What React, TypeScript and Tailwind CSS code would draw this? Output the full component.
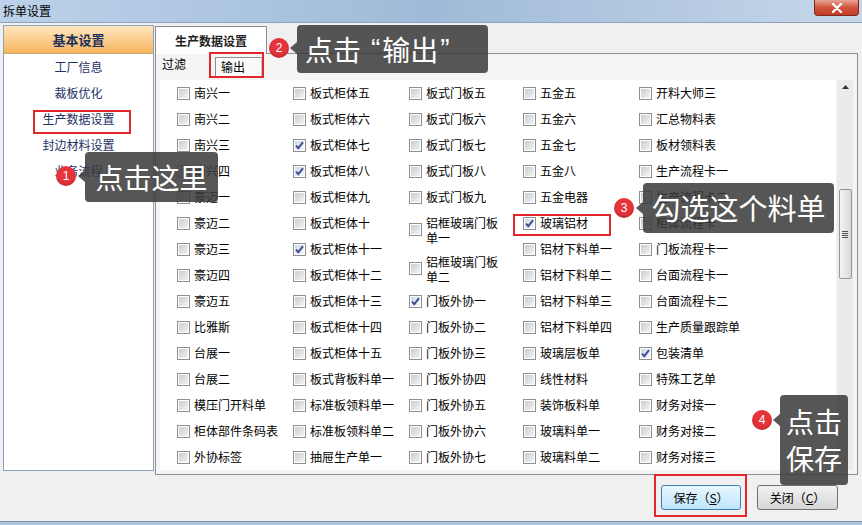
import React from "react";

type Item = { t: React.ReactNode; c?: boolean; tall?: boolean };

const col1: Item[] = [
  { t: "南兴一" }, { t: "南兴二" }, { t: "南兴三" }, { t: "南兴四" }, { t: "豪迈一" },
  { t: "豪迈二" }, { t: "豪迈三" }, { t: "豪迈四" }, { t: "豪迈五" }, { t: "比雅斯" },
  { t: "台展一" }, { t: "台展二" }, { t: "模压门开料单" }, { t: "柜体部件条码表" }, { t: "外协标签" },
];
const col2: Item[] = [
  { t: "板式柜体五" }, { t: "板式柜体六" }, { t: "板式柜体七", c: true }, { t: "板式柜体八", c: true },
  { t: "板式柜体九" }, { t: "板式柜体十" }, { t: "板式柜体十一", c: true }, { t: "板式柜体十二" },
  { t: "板式柜体十三" }, { t: "板式柜体十四" }, { t: "板式柜体十五" }, { t: "板式背板料单一" },
  { t: "标准板领料单一" }, { t: "标准板领料单二" }, { t: "抽屉生产单一" },
];
const col3: Item[] = [
  { t: "板式门板五" }, { t: "板式门板六" }, { t: "板式门板七" }, { t: "板式门板八" }, { t: "板式门板九" },
  { t: <>铝框玻璃门板<br />单一</>, tall: true },
  { t: <>铝框玻璃门板<br />单二</>, tall: true },
  { t: "门板外协一", c: true }, { t: "门板外协二" }, { t: "门板外协三" }, { t: "门板外协四" },
  { t: "门板外协五" }, { t: "门板外协六" }, { t: "门板外协七" },
];
const col4: Item[] = [
  { t: "五金五" }, { t: "五金六" }, { t: "五金七" }, { t: "五金八" }, { t: "五金电器" },
  { t: "玻璃铝材", c: true }, { t: "铝材下料单一" }, { t: "铝材下料单二" }, { t: "铝材下料单三" },
  { t: "铝材下料单四" }, { t: "玻璃层板单" }, { t: "线性材料" }, { t: "装饰板料单" },
  { t: "玻璃料单一" }, { t: "玻璃料单二" },
];
const col5: Item[] = [
  { t: "开料大师三" }, { t: "汇总物料表" }, { t: "板材领料表" }, { t: "生产流程卡一" },
  { t: "生产流程卡二" }, { t: "柜体流程卡" }, { t: "门板流程卡一" }, { t: "台面流程卡一" },
  { t: "台面流程卡二" }, { t: "生产质量跟踪单" }, { t: "包装清单", c: true }, { t: "特殊工艺单" },
  { t: "财务对接一" }, { t: "财务对接二" }, { t: "财务对接三" },
];

const columns: { w: string; items: Item[] }[] = [
  { w: "w-[116px]", items: col1 },
  { w: "w-[116px]", items: col2 },
  { w: "w-[114px]", items: col3 },
  { w: "w-[116px]", items: col4 },
  { w: "w-[116px]", items: col5 },
];

const navItems = ["工厂信息", "裁板优化", "生产数据设置", "封边材料设置", "业务流程"];

function CheckBox({ checked }: { checked?: boolean }) {
  return (
    <span className="flex h-[13px] w-[13px] shrink-0 items-center justify-center border border-[#8e8f8f] bg-white">
      <span
        className={
          checked
            ? "relative h-[9px] w-[9px] bg-gradient-to-br from-[#cfd8ea] to-[#f4f6fb]"
            : "relative h-[9px] w-[9px] bg-gradient-to-br from-[#c9cdd3] to-[#f3f3f3]"
        }
      >
        {checked && (
          <svg className="absolute -left-[1px] -top-[1px]" width="11" height="11" viewBox="0 0 11 11">
            <path d="M2 5.6 L4.3 8.2 L9 2.2" fill="none" stroke="#3f4f88" strokeWidth="1.9" />
          </svg>
        )}
      </span>
    </span>
  );
}

function Badge({ n, x, y }: { n: number; x: number; y: number }) {
  return (
    <div
      className="absolute flex h-[20px] w-[20px] items-center justify-center rounded-full bg-[#e5343a] font-['Liberation_Sans',sans-serif] text-[12px] text-white shadow-[inset_0_-2px_3px_rgba(0,0,0,0.15)]"
      style={{ left: x - 10, top: y - 10 }}
    >
      {n}
    </div>
  );
}

function Callout({ children, className, arrowTop }: { children: React.ReactNode; className: string; arrowTop: number }) {
  return (
    <div className={"absolute flex items-center rounded-[4px] bg-[rgba(58,58,58,0.86)] text-white " + className}>
      <span
        className="absolute -left-[7px] h-0 w-0 border-y-[6px] border-r-[7px] border-y-transparent border-r-[rgba(58,58,58,0.86)]"
        style={{ top: arrowTop - 6 }}
      />
      {children}
    </div>
  );
}

function Button({ label, hot, primary }: { label: string; hot: string; primary?: boolean }) {
  return (
    <button
      className={[
        "flex h-[25px] items-center justify-center rounded-[3px] border bg-gradient-to-b text-[12px] text-black",
        primary
          ? "w-[80px] border-[#3c7fb1] from-[#eaf6fd] to-[#bee6fd]"
          : "w-[81px] border-[#707070] from-[#f2f2f2] to-[#d6d6d6]",
      ].join(" ")}
    >
      {label}（<span className="underline">{hot}</span>）
    </button>
  );
}

export default function App() {
  return (
    <div className="relative flex h-[525px] w-[862px] flex-col overflow-hidden bg-[#f0f0f0] font-['Noto_Sans_CJK_SC','Liberation_Sans',sans-serif] text-black">
      {/* title bar */}
      <div className="relative flex h-[23px] shrink-0 items-center border-b border-[#8ba3c0] bg-gradient-to-r from-[#bcd2ea] via-[#9fbad8] to-[#c6d7e9] pl-[3px] text-[12px]">
        拆单设置
        <div className="absolute right-[3px] top-0 flex h-[16px] w-[45px] items-center justify-center rounded-b-[4px] border border-t-0 border-[#7a2a22] bg-gradient-to-b from-[#e8a493] via-[#d0543c] to-[#c53b22]">
          <svg width="12" height="10" viewBox="0 0 12 10">
            <path d="M2 1 L10 9 M10 1 L2 9" stroke="#fff" strokeWidth="2.4" strokeLinecap="round" />
          </svg>
        </div>
      </div>

      {/* main */}
      <div className="flex h-[448px] shrink-0 gap-[1px] pl-[3px] pr-[4px] pt-[2px]">
        {/* left nav */}
        <div className="flex w-[151px] shrink-0 flex-col border border-[#8da2bf] bg-white">
          <div className="flex h-[28px] items-center justify-center border-b border-[#c7a979] bg-gradient-to-b from-[#fee8c0] to-[#f6b45a] text-[13px] font-bold text-[#1c2f5e]">
            基本设置
          </div>
          {navItems.map((n) => (
            <div key={n} className="flex h-[26px] items-center justify-center text-[12px] text-[#1d3163]">
              {n}
            </div>
          ))}
        </div>

        {/* tab panel */}
        <div className="flex flex-1 flex-col">
          <div className="flex h-[28px] shrink-0 items-end">
            <div className="relative -mb-[1px] flex h-[28px] w-[112px] items-center justify-center border border-b-0 border-[#8c8e94] bg-white text-[12px] font-bold text-[#222]">
              生产数据设置
            </div>
          </div>
          <div className="flex flex-1 flex-col border border-[#8c8e94] bg-[#f4f4f4] px-[4px] pb-[4px]">
            <div className="flex h-[26px] shrink-0 items-end text-[12px]">
              <div className="mb-[7px] ml-[2px] w-[53px]">过滤</div>
              <div className="mb-[2px] flex h-[21px] w-[47px] items-center border border-b-0 border-l-[#8c8e94] border-t-[#8c8e94] border-r-[#c8c8c8] bg-[#fafafa] pb-[2px] pl-[5px]">
                输出
              </div>
            </div>
            <div className="flex flex-1 overflow-hidden bg-white">
              <div className="flex flex-1 pl-[17px]">
                {columns.map((col, i) => (
                  <div key={i} className={"flex shrink-0 flex-col " + col.w}>
                    {col.items.map((it, j) => (
                      <div
                        key={j}
                        className={
                          "flex shrink-0 items-center gap-[4px] text-[12px] " +
                          (it.tall ? "h-[39px] leading-[15px]" : "h-[26px]")
                        }
                      >
                        <CheckBox checked={it.c} />
                        <span className="whitespace-nowrap">{it.t}</span>
                      </div>
                    ))}
                  </div>
                ))}
              </div>
              {/* scrollbar */}
              <div className="flex w-[17px] shrink-0 flex-col items-center border-l border-[#f4f4f4] bg-[#ebebeb]">
                <svg className="mt-[5px]" width="7" height="4" viewBox="0 0 7 4">
                  <path d="M0 4 L3.5 0 L7 4 Z" fill="#333" />
                </svg>
                <div className="mt-[100px] flex h-[90px] w-[13px] items-center justify-center rounded-[2px] border border-[#979797] bg-gradient-to-r from-[#f3f3f3] to-[#d9d9d9]">
                  <div className="flex flex-col gap-[1px]">
                    <span className="h-[1px] w-[6px] bg-[#555]" />
                    <span className="h-[1px] w-[6px] bg-[#555]" />
                    <span className="h-[1px] w-[6px] bg-[#555]" />
                    <span className="h-[1px] w-[6px] bg-[#555]" />
                  </div>
                </div>
              </div>
            </div>
          </div>
        </div>
      </div>

      {/* buttons */}
      <div className="flex flex-1 items-start justify-end gap-[16px] pr-[24px] pt-[14px]">
        <Button label="保存" hot="S" primary />
        <Button label="关闭" hot="C" />
      </div>
      <div className="h-[4px] shrink-0 border-t border-[#7f93ad] bg-[#aec4dc]" />

      {/* annotations */}
      <div className="absolute left-[33px] top-[110px] h-[24px] w-[98px] border-2 border-[#e3262c]" />
      <div className="absolute left-[209px] top-[52px] h-[26px] w-[55px] border-2 border-[#e3262c]" />
      <div className="absolute left-[513px] top-[214px] h-[22px] w-[98px] border-2 border-[#e3262c]" />
      <div className="absolute left-[654px] top-[474px] h-[43px] w-[93px] border-2 border-[#e3262c]" />

      <Callout className="left-[85px] top-[152px] h-[50px] w-[133px] justify-center text-[28px]" arrowTop={24}>
        点击这里
      </Callout>
      <Callout className="left-[297px] top-[25px] h-[48px] w-[191px] pl-[8px] text-[28px]" arrowTop={23}>
        点击
        <span className="ml-[10px] mr-[2px] font-['Liberation_Sans',sans-serif]">“</span>
        输出
        <span className="ml-[2px] font-['Liberation_Sans',sans-serif]">”</span>
      </Callout>
      <Callout className="left-[643px] top-[183px] h-[50px] w-[191px] justify-center text-[29px]" arrowTop={25}>
        勾选这个料单
      </Callout>
      <Callout className="left-[780px] top-[395px] h-[90px] w-[68px] flex-col justify-center text-[28px] leading-[37px]" arrowTop={25}>
        <span>点击</span>
        <span>保存</span>
      </Callout>

      <Badge n={1} x={66} y={176} />
      <Badge n={2} x={279} y={48} />
      <Badge n={3} x={624} y={208} />
      <Badge n={4} x={762} y={420} />
    </div>
  );
}
